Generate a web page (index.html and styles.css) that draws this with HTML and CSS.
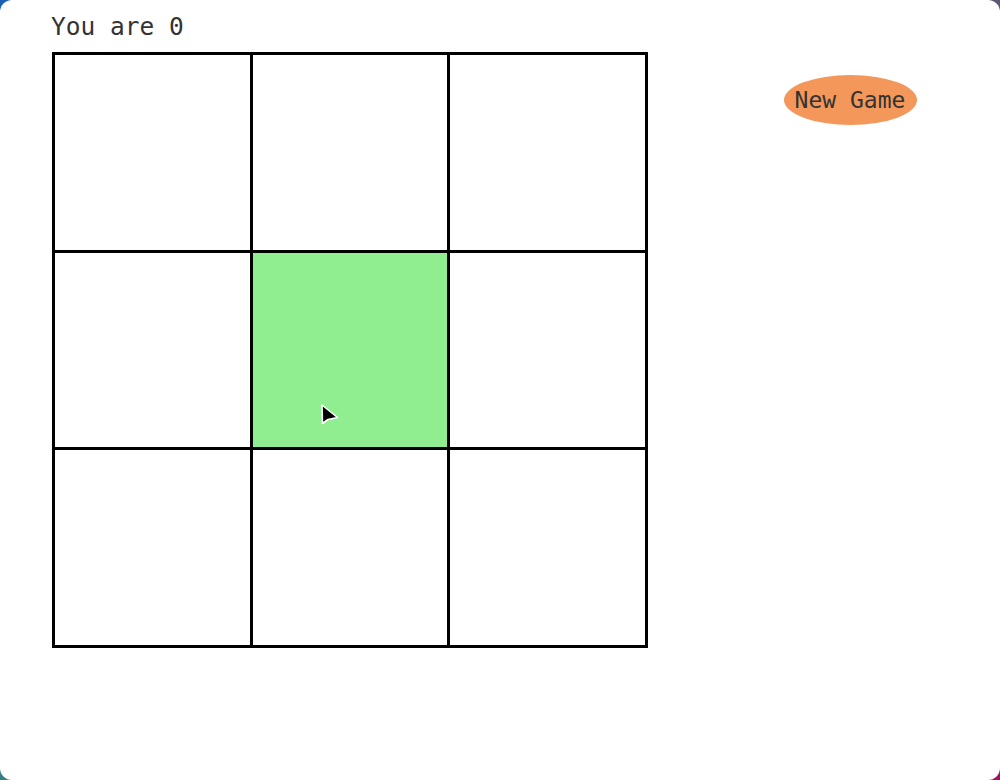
FILE: index.html
```html
<!DOCTYPE html>
<html>
<head>
<meta charset="utf-8">
<link rel="stylesheet" href="styles.css">
</head>
<body>
<div class="window">
  <div class="main">
    <div class="status">You are 0</div>
    <div class="board">
      <div class="cell"></div>
      <div class="cell"></div>
      <div class="cell"></div>
      <div class="cell"></div>
      <div class="cell active">
        <svg class="cursor" width="22" height="26" viewBox="0 0 22 26">
          <path d="M2 2 L2.5 20.5 L8 16.5 L17.5 14.5 Z" fill="#000" stroke="#fff" stroke-width="1.6" stroke-linejoin="round"/>
        </svg>
      </div>
      <div class="cell"></div>
      <div class="cell"></div>
      <div class="cell"></div>
      <div class="cell"></div>
    </div>
  </div>
  <div class="side">
    <button class="new-game">New Game</button>
  </div>
</div>
</body>
</html>
```
FILE: styles.css
```css
html, body {
  margin: 0;
  padding: 0;
  height: 100%;
}
body {
  background: linear-gradient(135deg, #1a5fb4 0%, #2a8a8a 40%, #8a2a5a 70%, #a01060 100%);
  font-family: "DejaVu Sans Mono", "Liberation Mono", monospace;
}
.window {
  width: 1000px;
  height: 780px;
  background: #fff;
  border-radius: 12px;
  display: flex;
  box-sizing: border-box;
  padding: 12px 0 0 52px;
}
.main {
  display: flex;
  flex-direction: column;
}
.status {
  font-size: 24.5px;
  line-height: 30px;
  color: #333;
  height: 40px;
  margin-left: -1px;
}
.board {
  display: grid;
  grid-template-columns: repeat(3, 194.5px);
  grid-template-rows: repeat(3, 194.5px);
  gap: 3px;
  padding: 3px;
  background: #000;
  width: max-content;
}
.cell {
  background: #fff;
  position: relative;
}
.cell.active {
  background: #90ee90;
}
.cursor {
  position: absolute;
  left: 67px;
  top: 150px;
}
.side {
  padding: 63px 0 0 136px;
}
.new-game {
  width: 133px;
  height: 50px;
  border: none;
  border-radius: 50%;
  background: #f4975a;
  color: #333;
  font-family: "DejaVu Sans Mono", "Liberation Mono", monospace;
  font-size: 23px;
  padding: 0;
  cursor: pointer;
}
```
